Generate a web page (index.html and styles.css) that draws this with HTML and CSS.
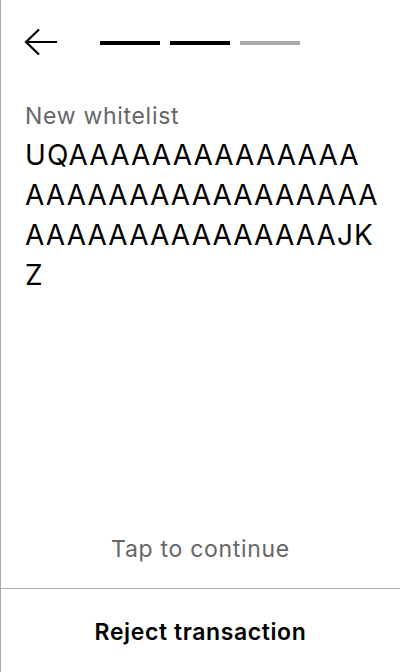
FILE: index.html
```html
<!DOCTYPE html>
<html>
<head>
<meta charset="utf-8">
<link rel="stylesheet" href="styles.css">
</head>
<body>
<div class="screen">
  <header class="top">
    <button class="back" aria-label="Back">
      <svg width="34" height="30" viewBox="0 0 34 30"><path d="M33 14H3M15 1.5L2 14l13 12.5" fill="none" stroke="#000" stroke-width="2.2"/></svg>
    </button>
    <div class="steps">
      <span class="step done"></span>
      <span class="step done"></span>
      <span class="step"></span>
    </div>
  </header>
  <main class="content">
    <div class="label">New whitelist</div>
    <div class="address">
      <span class="chunk">UQAAAAAAAAAAAAAA</span>
      <span class="chunk">AAAAAAAAAAAAAAAAA</span>
      <span class="chunk">AAAAAAAAAAAAAAAJK</span>
      <span class="chunk">Z</span>
    </div>
  </main>
  <div class="hint">Tap to continue</div>
  <footer class="footer">
    <button class="reject">Reject transaction</button>
  </footer>
</div>
</body>
</html>
```
FILE: styles.css
```css
html, body {
  margin: 0;
  padding: 0;
  background: #fff;
}
body {
  font-family: Inter, "Noto Sans", sans-serif;
  color: #000;
}
.screen {
  height: 672px;
  box-sizing: border-box;
  border-left: 1px solid #aaa;
  display: flex;
  flex-direction: column;
}
.top {
  display: flex;
  align-items: center;
  padding: 28px 0 0 23px;
  height: 30px;
}
.back {
  border: 0;
  background: none;
  padding: 0;
  width: 34px;
  height: 30px;
  display: flex;
}
.steps {
  display: flex;
  gap: 10px;
  margin-left: 42px;
  margin-top: -1px;
}
.step {
  width: 60px;
  height: 4px;
  background: #aaa;
}
.step.done {
  background: #000;
}
.content {
  padding: 44px 24px 0 24px;
  flex: 1;
}
.label {
  font-size: 23px;
  line-height: 28px;
  letter-spacing: 0.7px;
  color: #666;
}
.address {
  font-size: 28px;
  line-height: 40px;
  letter-spacing: 1.1px;
  margin-top: 5px;
}
.chunk {
  display: block;
  white-space: nowrap;
}
.hint {
  text-align: center;
  font-size: 23px;
  letter-spacing: 0.7px;
  color: #666;
  line-height: 28px;
  padding-bottom: 25px;
}
.footer {
  border-top: 1px solid #aaa;
  height: 83px;
  display: flex;
}
.reject {
  flex: 1;
  border: 0;
  background: none;
  font-family: Inter, "Noto Sans", sans-serif;
  font-size: 23px;
  letter-spacing: 0.6px;
  font-weight: 600;
  color: #000;
  padding: 2px 0 0 0;
}
```
